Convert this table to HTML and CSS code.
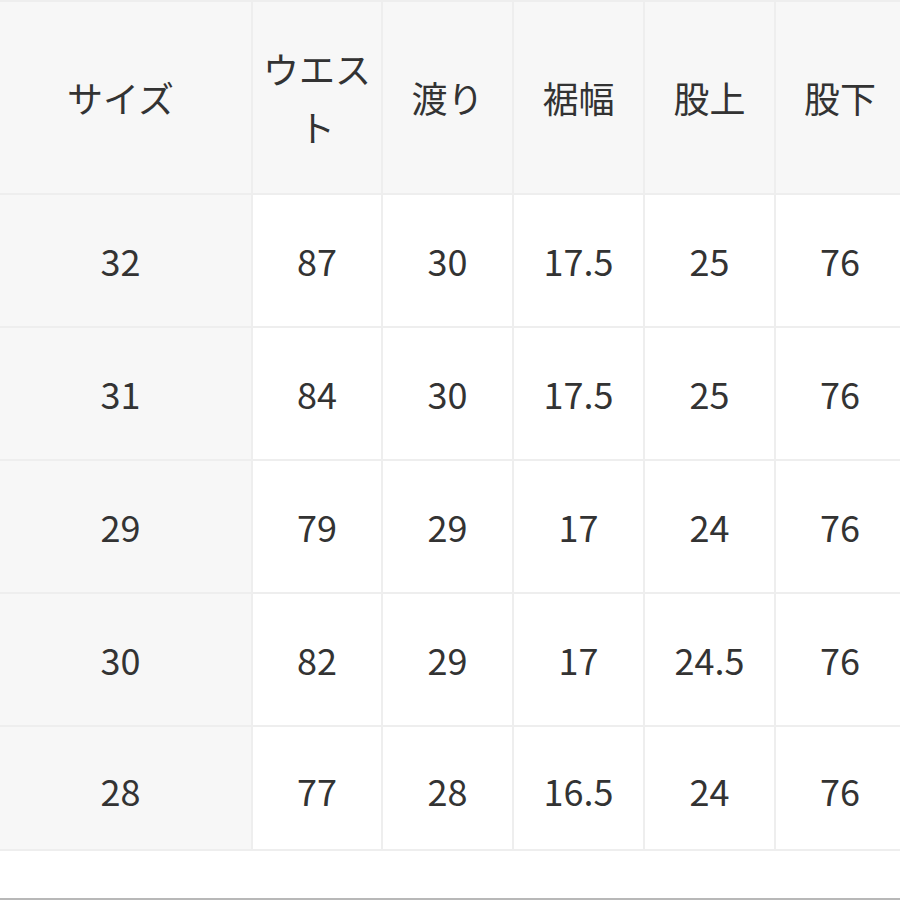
FILE: index.html
```html
<!DOCTYPE html>
<html lang="ja">
<head>
<meta charset="utf-8">
<link rel="stylesheet" href="styles.css">
</head>
<body>
<div class="page">
  <div class="size-table">
    <div class="cell head first">サイズ</div>
    <div class="cell head">ウエスト</div>
    <div class="cell head">渡り</div>
    <div class="cell head">裾幅</div>
    <div class="cell head">股上</div>
    <div class="cell head">股下</div>

    <div class="cell first">32</div>
    <div class="cell">87</div>
    <div class="cell">30</div>
    <div class="cell">17.5</div>
    <div class="cell">25</div>
    <div class="cell">76</div>

    <div class="cell first">31</div>
    <div class="cell">84</div>
    <div class="cell">30</div>
    <div class="cell">17.5</div>
    <div class="cell">25</div>
    <div class="cell">76</div>

    <div class="cell first">29</div>
    <div class="cell">79</div>
    <div class="cell">29</div>
    <div class="cell">17</div>
    <div class="cell">24</div>
    <div class="cell">76</div>

    <div class="cell first">30</div>
    <div class="cell">82</div>
    <div class="cell">29</div>
    <div class="cell">17</div>
    <div class="cell">24.5</div>
    <div class="cell">76</div>

    <div class="cell first last">28</div>
    <div class="cell last">77</div>
    <div class="cell last">28</div>
    <div class="cell last">16.5</div>
    <div class="cell last">24</div>
    <div class="cell last">76</div>
  </div>
  <div class="bottom-rule"></div>
</div>
</body>
</html>
```

FILE: styles.css
```css
html, body {
  margin: 0;
  padding: 0;
  background: #ffffff;
}

.page {
  width: 900px;
  height: 900px;
  overflow: hidden;
  display: flex;
  flex-direction: column;
}

.size-table {
  display: grid;
  grid-template-columns: 251px 128px 129px 129px 129px 128px;
  grid-template-rows: 191px repeat(4, 131px) 122px;
  gap: 2px;
  padding: 2px 0 2px 0;
  background: #eeeeee;
  width: 904px;
  flex: none;
  font-family: "Noto Sans CJK JP", "Noto Sans", sans-serif;
  font-size: 36px;
  line-height: 1.6;
  color: #333333;
}

.cell {
  background: #ffffff;
  display: flex;
  align-items: center;
  justify-content: center;
  text-align: center;
  padding: 0 10px;
  box-sizing: border-box;
}

.head {
  background: #f7f7f7;
}

.first {
  background: #f7f7f7;
  padding-right: 20px;
}

.last {
  padding-top: 6px;
}

.bottom-rule {
  margin-top: auto;
  height: 2px;
  background: #b8b8b8;
  flex: none;
}
```
